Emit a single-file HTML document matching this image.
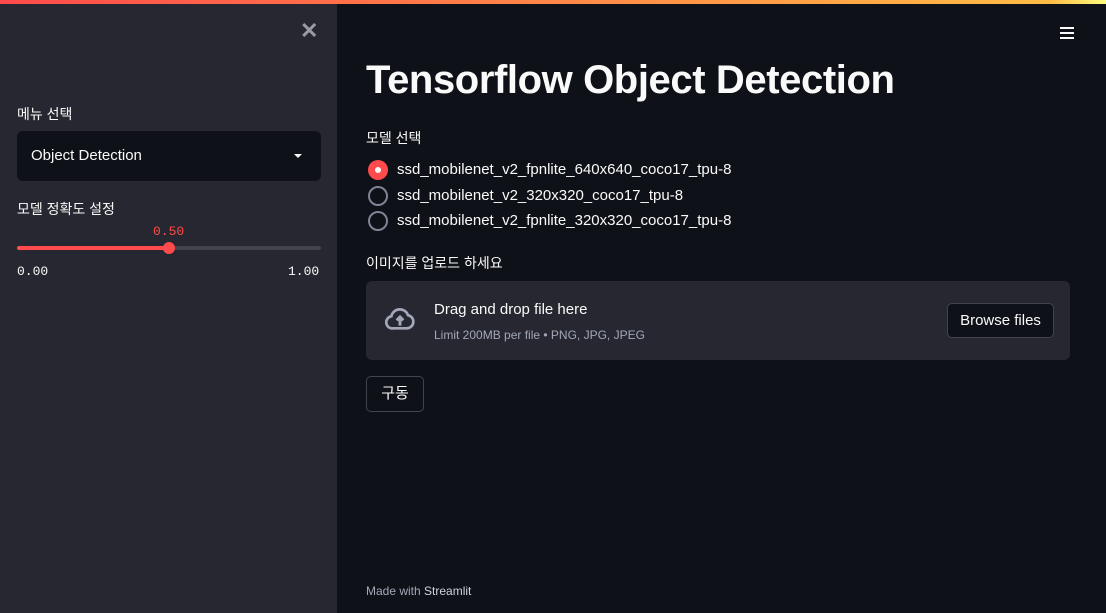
<!DOCTYPE html>
<html><head><meta charset="utf-8"><style>
*{margin:0;padding:0;box-sizing:border-box}
body{width:1106px;height:613px;overflow:hidden;background:#0e1117;color:#fafafa;font-family:"Liberation Sans","Noto Sans CJK KR",sans-serif;position:relative}
.bar{position:absolute;left:0;top:0;width:1106px;height:4px;background:linear-gradient(90deg,#ff4b4b,#ffbd45 95%,#fffd80)}
.side{position:absolute;left:0;top:4px;width:337px;height:609px;background:#262730}
.abs{position:absolute}
.lbl{font-size:14px;color:#fafafa}
.mono{font-family:"Liberation Mono",monospace;font-size:13px}
.radio{position:absolute;left:368px;width:20px;height:20px;border-radius:50%;border:2px solid #808495}
.rt{position:absolute;left:397px;font-size:15px}
</style></head><body>
<div class="bar"></div>
<div class="side">
 <div class="abs" style="left:300px;top:14px;font-size:22px;color:#9a9ca5;font-weight:bold">✕</div>
 <div class="abs lbl" style="left:17px;top:100px">메뉴 선택</div>
 <div class="abs" style="left:17px;top:127px;width:304px;height:50px;background:#0e1117;border-radius:6px">
  <div class="abs" style="left:14px;top:16px;font-size:15px">Object Detection</div>
  <div class="abs" style="left:277px;top:23px;width:0;height:0;border-left:4px solid transparent;border-right:4px solid transparent;border-top:4px solid #fafafa"></div>
 </div>
 <div class="abs lbl" style="left:17px;top:195px">모델 정확도 설정</div>
 <div class="abs mono" style="left:153px;top:220px;color:#ff4b4b">0.50</div>
 <div class="abs" style="left:17px;top:242px;width:304px;height:4px;border-radius:2px;background:#41444c"></div>
 <div class="abs" style="left:17px;top:242px;width:152px;height:4px;border-radius:2px;background:#ff4b4b"></div>
 <div class="abs" style="left:163px;top:238px;width:12px;height:12px;border-radius:50%;background:#ff4b4b"></div>
 <div class="abs mono" style="left:17px;top:260px">0.00</div>
 <div class="abs mono" style="left:288px;top:260px">1.00</div>
</div>
<div class="abs" style="left:1060px;top:27px;width:14px;height:12px;border-top:2px solid #fafafa;border-bottom:2px solid #fafafa"><div style="margin-top:3px;height:2px;background:#fafafa"></div></div>
<div class="abs" style="left:366px;top:58px;font-size:40px;font-weight:bold;letter-spacing:-0.4px">Tensorflow Object Detection</div>
<div class="abs lbl" style="left:366px;top:128px">모델 선택</div>
<div class="radio" style="top:160px;border:none;background:#ff4b4b"><div style="margin:7px;width:6px;height:6px;border-radius:50%;background:#fff"></div></div>
<div class="rt" style="top:161px">ssd_mobilenet_v2_fpnlite_640x640_coco17_tpu-8</div>
<div class="radio" style="top:186px"></div>
<div class="rt" style="top:187px">ssd_mobilenet_v2_320x320_coco17_tpu-8</div>
<div class="radio" style="top:211px"></div>
<div class="rt" style="top:212px">ssd_mobilenet_v2_fpnlite_320x320_coco17_tpu-8</div>
<div class="abs lbl" style="left:366px;top:253px">이미지를 업로드 하세요</div>
<div class="abs" style="left:366px;top:281px;width:704px;height:79px;background:#262730;border-radius:6px">
 <svg class="abs" style="left:15px;top:22px" width="38" height="32" viewBox="0 0 24 24" fill="none" stroke="#a3a8b8" stroke-width="2"><path d="M7 19h10a5 5 0 0 0 1-9.9A6.5 6.5 0 0 0 5.5 10 4.5 4.5 0 0 0 7 19z"/><path d="M12 17v-6M9.5 13l2.5-2.5 2.5 2.5" stroke-width="2.2"/></svg>
 <div class="abs" style="left:68px;top:20px;font-size:15px">Drag and drop file here</div>
 <div class="abs" style="left:68px;top:47px;font-size:12px;color:#a3a8b8">Limit 200MB per file • PNG, JPG, JPEG</div>
 <div class="abs" style="left:581px;top:22px;width:107px;height:35px;background:#0e1117;border:1px solid #41444c;border-radius:5px;font-size:15px;text-align:center;line-height:33px">Browse files</div>
</div>
<div class="abs" style="left:366px;top:376px;width:58px;height:36px;border:1px solid #41444c;border-radius:5px;font-size:15px;text-align:center;line-height:34px">구동</div>
<div class="abs" style="left:366px;top:584px;font-size:12px;color:#a3a8b8">Made with <span style="color:#d0d3dc">Streamlit</span></div>
</body></html>
